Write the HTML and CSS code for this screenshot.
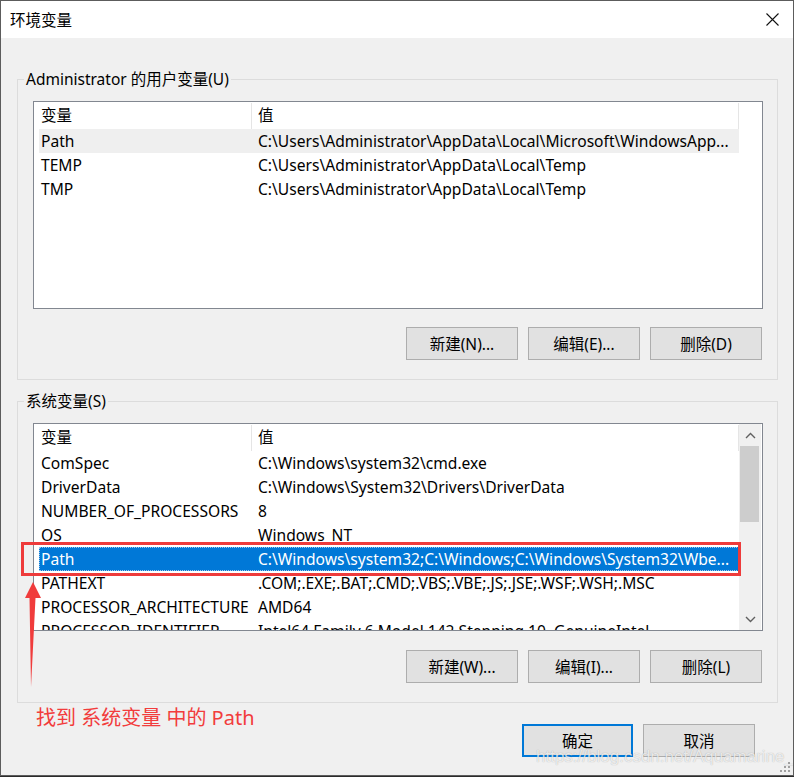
FILE: index.html
```html
<!DOCTYPE html>
<html lang="zh-CN">
<head>
    <meta charset="UTF-8">
    <title>环境变量</title>
    <link rel="stylesheet" href="styles.css">
</head>
<body>
    <div class="window">
        <div class="titlebar">
            <span class="title">环境变量</span>
            <svg class="close" width="13" height="13" viewBox="0 0 13 13">
                <path d="M0.5 0.5 L12.5 12.5 M12.5 0.5 L0.5 12.5" stroke="#111" stroke-width="1.1" fill="none"/>
            </svg>
        </div>

        <div class="content">
            <fieldset class="group">
                <legend>Administrator 的用户变量(U)</legend>
                <div class="list">
                    <div class="list-rows">
                        <div class="list-head">
                            <div class="col-name">变量</div>
                            <div class="col-value">值</div>
                        </div>
                        <div class="row hover"><div class="col-name">Path</div><div class="col-value">C:\Users\Administrator\AppData\Local\Microsoft\WindowsApp...</div></div>
                        <div class="row"><div class="col-name">TEMP</div><div class="col-value">C:\Users\Administrator\AppData\Local\Temp</div></div>
                        <div class="row"><div class="col-name">TMP</div><div class="col-value">C:\Users\Administrator\AppData\Local\Temp</div></div>
                    </div>
                </div>
                <div class="btn-row">
                    <button class="btn">新建(N)...</button>
                    <button class="btn">编辑(E)...</button>
                    <button class="btn">删除(D)</button>
                </div>
            </fieldset>

            <fieldset class="group second">
                <legend>系统变量(S)</legend>
                <div class="list">
                    <div class="list-rows">
                        <div class="list-head">
                            <div class="col-name">变量</div>
                            <div class="col-value">值</div>
                        </div>
                        <div class="row"><div class="col-name">ComSpec</div><div class="col-value">C:\Windows\system32\cmd.exe</div></div>
                        <div class="row"><div class="col-name">DriverData</div><div class="col-value">C:\Windows\System32\Drivers\DriverData</div></div>
                        <div class="row"><div class="col-name">NUMBER_OF_PROCESSORS</div><div class="col-value">8</div></div>
                        <div class="row"><div class="col-name">OS</div><div class="col-value">Windows_NT</div></div>
                        <div class="row selected"><div class="col-name">Path</div><div class="col-value">C:\Windows\system32;C:\Windows;C:\Windows\System32\Wbe...</div></div>
                        <div class="row"><div class="col-name">PATHEXT</div><div class="col-value">.COM;.EXE;.BAT;.CMD;.VBS;.VBE;.JS;.JSE;.WSF;.WSH;.MSC</div></div>
                        <div class="row"><div class="col-name">PROCESSOR_ARCHITECTURE</div><div class="col-value">AMD64</div></div>
                        <div class="row"><div class="col-name">PROCESSOR_IDENTIFIER</div><div class="col-value">Intel64 Family 6 Model 142 Stepping 10, GenuineIntel</div></div>
                    </div>
                    <div class="scrollbar">
                        <div class="sb-btn">
                            <svg width="11" height="7" viewBox="0 0 11 7"><path d="M1 6 L5.5 1.5 L10 6" stroke="#606060" stroke-width="1.4" fill="none"/></svg>
                        </div>
                        <div class="sb-thumb"></div>
                        <div class="sb-track"></div>
                        <div class="sb-btn">
                            <svg width="11" height="7" viewBox="0 0 11 7"><path d="M1 1 L5.5 5.5 L10 1" stroke="#606060" stroke-width="1.4" fill="none"/></svg>
                        </div>
                    </div>
                </div>
                <div class="btn-row">
                    <button class="btn">新建(W)...</button>
                    <button class="btn">编辑(I)...</button>
                    <button class="btn">删除(L)</button>
                </div>
            </fieldset>

            <div class="footer">
                <button class="btn primary">确定</button>
                <button class="btn">取消</button>
            </div>
        </div>

        <!-- annotation layer drawn over the dialog -->
        <div class="mark-box"></div>
        <svg class="mark-arrow" width="25" height="112" viewBox="0 0 25 112">
            <polygon points="13,4 21,20 15.5,20 11,109 9.5,20 5,20" fill="#f03c3c"/>
        </svg>
        <div class="mark-note">找到 系统变量 中的 Path</div>
        <div class="watermark">https://blog.csdn.net/Aquamarine__</div>
        <svg class="grip" width="12" height="12" viewBox="0 0 12 12">
            <rect x="9" y="1" width="2" height="2" fill="#a0a0a0"/>
            <rect x="5" y="5" width="2" height="2" fill="#a0a0a0"/>
            <rect x="9" y="5" width="2" height="2" fill="#a0a0a0"/>
            <rect x="1" y="9" width="2" height="2" fill="#a0a0a0"/>
            <rect x="5" y="9" width="2" height="2" fill="#a0a0a0"/>
            <rect x="9" y="9" width="2" height="2" fill="#a0a0a0"/>
        </svg>
    </div>
</body>
</html>
```

FILE: styles.css
```css
body {
    margin: 0;
    background-color: #2b2b2b;
    font-family: "Noto Sans", "Noto Sans CJK SC", sans-serif;
    color: #000;
}
.window {
    position: relative;
    width: 792px;
    height: 774px;
    border: 1px solid #5c5c5c;
    background-color: #f0f0f0;
    overflow: hidden;
}
.titlebar {
    height: 37px;
    background-color: #fff;
    display: flex;
    align-items: center;
    justify-content: space-between;
    padding: 0 14px 0 9px;
}
.title {
    font-size: 15.5px;
}
.content {
    padding: 31px 15px 0 16px;
}
.group {
    margin: 0;
    min-width: 0;
    border: 1px solid #dcdcdc;
    padding: 12px 14px 19px 15px;
}
.group.second {
    margin-top: 11px;
}
.group legend {
    font-size: 15.5px;
    line-height: 20px;
    padding: 0 2px;
    margin-left: -9px;
}
.list {
    height: 208px;
    box-sizing: border-box;
    border: 1px solid #828790;
    background-color: #fff;
    display: flex;
}
.list-rows {
    width: 705px;
    padding-left: 5px;
    box-sizing: border-box;
    overflow: hidden;
}
.list-head {
    display: flex;
    height: 27px;
    font-size: 15.5px;
    line-height: 25px;
}
.list-head .col-name {
    width: 210px;
    padding-left: 2px;
    border-right: 1px solid #e5e5e5;
    margin-top: 1px;
}
.list-head .col-value {
    flex: 1;
    padding-left: 6px;
    border-right: 1px solid #e5e5e5;
    margin-top: 1px;
}
.row {
    display: flex;
    height: 24px;
    line-height: 24px;
    font-size: 15.6px;
    white-space: nowrap;
    box-sizing: border-box;
}
.row .col-name {
    width: 211px;
    padding-left: 2px;
    overflow: hidden;
}
.row .col-value {
    flex: 1;
    padding-left: 6px;
    overflow: hidden;
}
.row.hover {
    background-color: #efefef;
}
.row.selected {
    background-color: #0078d7;
    color: #fff;
    outline: 1px dotted #9fc6ea;
    outline-offset: -1px;
}
.scrollbar {
    width: 22px;
    background-color: #f0f0f0;
    display: flex;
    flex-direction: column;
}
.sb-btn {
    height: 22px;
    display: flex;
    align-items: center;
    justify-content: center;
}
.sb-thumb {
    height: 76px;
    margin: 0 2px 0 1px;
    background-color: #cdcdcd;
}
.sb-track {
    flex: 1;
}
.btn-row {
    display: flex;
    justify-content: flex-end;
    gap: 10px;
    margin-top: 18px;
    margin-right: 1px;
}
.second .btn-row {
    margin-top: 19px;
}
.btn {
    width: 112px;
    height: 33px;
    padding: 0;
    font-family: inherit;
    font-size: 15.5px;
    color: #000;
    background-color: #e1e1e1;
    border: 1px solid #adadad;
}
.btn.primary {
    width: 111px;
    border: 2px solid #0078d7;
}
.footer {
    display: flex;
    justify-content: flex-end;
    gap: 10px;
    margin-top: 21px;
    padding-right: 23px;
}
.mark-box {
    position: absolute;
    left: 20px;
    top: 541px;
    width: 720px;
    height: 34px;
    box-sizing: border-box;
    border: 3px solid #ee3b3b;
}
.mark-arrow {
    position: absolute;
    left: 19px;
    top: 577px;
}
.mark-note {
    position: absolute;
    left: 35px;
    top: 704px;
    font-size: 20px;
    line-height: 26px;
    color: #f23c3c;
}
.watermark {
    position: absolute;
    left: 535px;
    top: 746px;
    font-family: "Liberation Sans", sans-serif;
    font-size: 17px;
    color: rgba(255, 255, 255, 0.75);
    text-shadow: 0 0 1px rgba(0, 0, 0, 0.3);
}
.grip {
    position: absolute;
    right: 2px;
    bottom: 2px;
}
```
